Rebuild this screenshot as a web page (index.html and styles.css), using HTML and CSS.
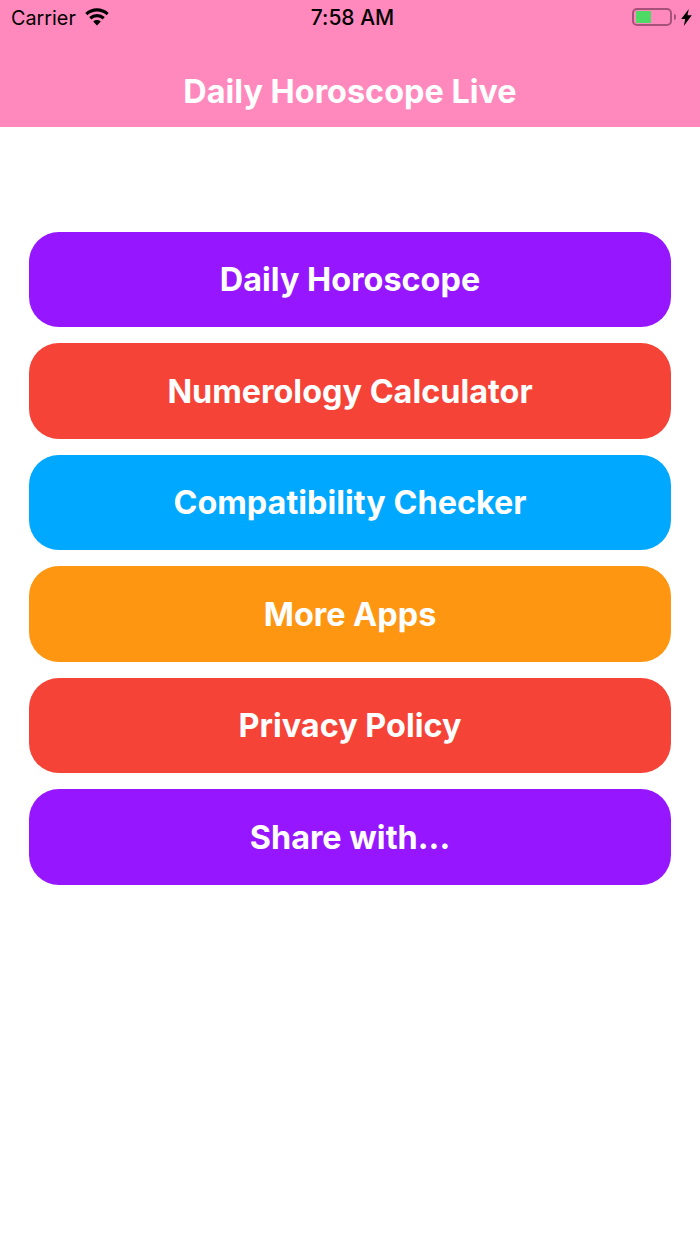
FILE: index.html
```html
<!DOCTYPE html>
<html lang="en">
<head>
<meta charset="utf-8">
<title>Daily Horoscope Live</title>
<link rel="stylesheet" href="styles.css">
</head>
<body>
<header class="header">
  <div class="status">
    <div class="status-left">
      <span class="carrier">Carrier</span>
      <svg class="wifi" width="24" height="18" viewBox="0 0 24 18"><path d="M12 17.5 8.2 13.4a5.6 5.6 0 0 1 7.6 0Z"/><path d="M6.3 11.4 4.2 9.1a11.6 11.6 0 0 1 15.6 0l-2.1 2.3a8.4 8.4 0 0 0-11.4 0Z"/><path d="M2.4 7.2.3 4.9a17.3 17.3 0 0 1 23.4 0l-2.1 2.3a14.2 14.2 0 0 0-19.2 0Z"/></svg>
    </div>
    <span class="time">7:58 AM</span>
    <div class="status-right">
      <div class="battery"><div class="battery-fill"></div></div>
      <div class="battery-cap"></div>
      <svg class="bolt" width="11" height="17" viewBox="0 0 11 17"><path d="M7.8 0 .2 10h4L2.8 17 10.8 6.2H6.5Z"/></svg>
    </div>
  </div>
  <h1 class="title">Daily Horoscope Live</h1>
</header>
<main class="menu">
  <a class="btn purple">Daily Horoscope</a>
  <a class="btn red">Numerology Calculator</a>
  <a class="btn blue">Compatibility Checker</a>
  <a class="btn orange">More Apps</a>
  <a class="btn red">Privacy Policy</a>
  <a class="btn purple">Share with...</a>
</main>
</body>
</html>
```
FILE: styles.css
```css
html, body { margin: 0; padding: 0; background: #fff; }
body { width: 700px; height: 1244px; overflow: hidden; font-family: Inter, "Liberation Sans", sans-serif; font-feature-settings: "calt" 0, "liga" 0; }
.header { height: 127px; background: #ff88bd; box-sizing: border-box; }
.status { height: 36px; display: flex; align-items: center; justify-content: space-between; padding: 0 8px 0 11px; position: relative; color: #000; }
.status-left { display: flex; align-items: center; gap: 9px; }
.carrier { font-size: 19.8px; line-height: 36px; }
.wifi { display: block; margin-top: -3px; }
.time { position: absolute; left: 0; right: 0; text-align: center; font-size: 21px; font-weight: 500; line-height: 36px; padding-left: 5px; }
.status-right { display: flex; align-items: center; margin-bottom: 2px; }
.battery { width: 40px; height: 18px; box-sizing: border-box; border: 2px solid #a5517a; border-radius: 5px; padding: 1px 2px; }
.battery-fill { width: 15px; height: 100%; background: #4cd964; }
.battery-cap { width: 2px; height: 6px; background: #a5517a; margin: 0 5px 0 2px; border-radius: 0 2px 2px 0; }
.bolt { display: block; }
.title { margin: 0; height: 91px; line-height: 111px; text-align: center; color: #fff; font-size: 32.4px; font-weight: 650; }
.menu { display: flex; flex-direction: column; gap: 16px; padding: 104.6px 29px 0; }
.btn { height: 95.5px; border-radius: 30px; display: flex; align-items: center; justify-content: center; color: #fff; font-size: 32.4px; font-weight: 650; padding-top: 1px; box-sizing: border-box; }
.purple { background: #9617ff; }
.red { background: #f64337; }
.blue { background: #00a8ff; }
.orange { background: #ff9612; }
```
